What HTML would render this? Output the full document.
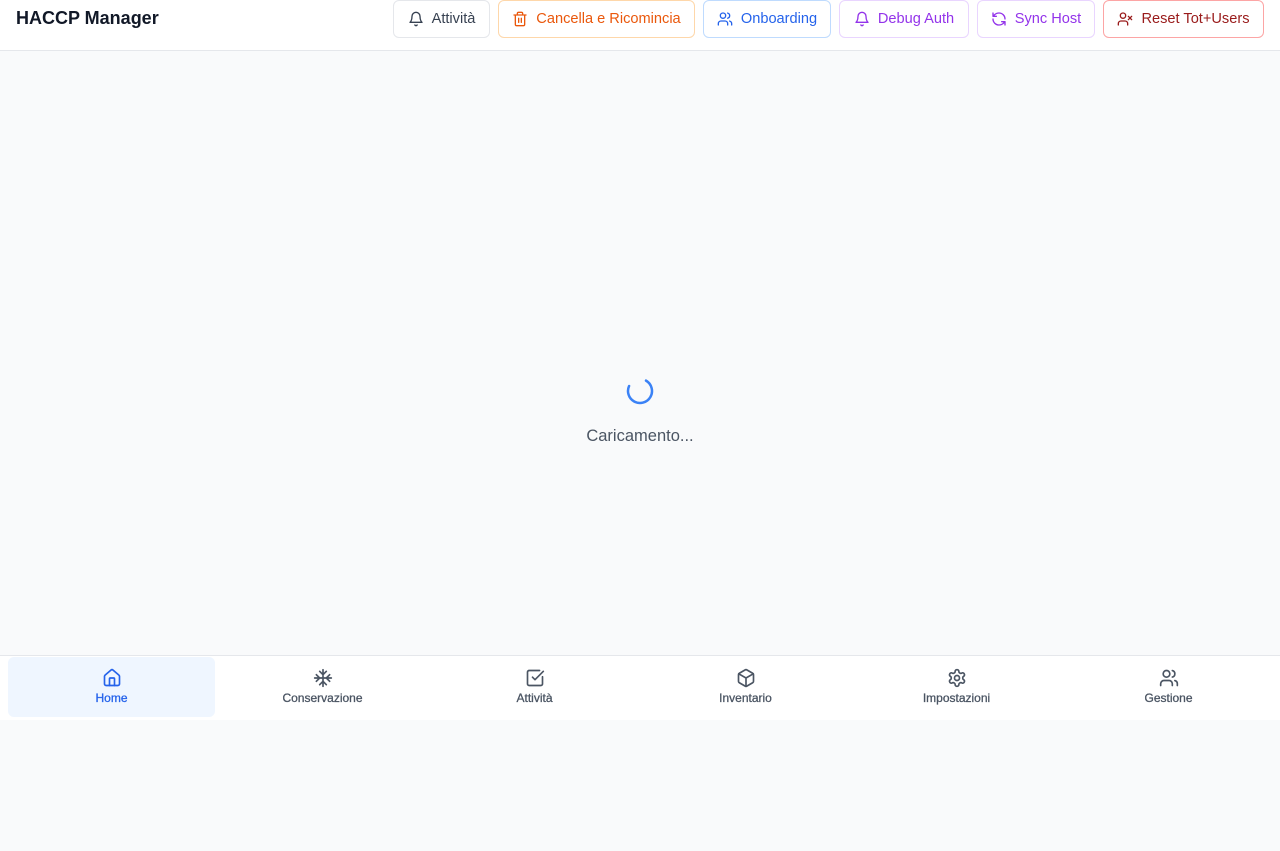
<!DOCTYPE html>
<html><head><meta charset="utf-8"><style>
*{box-sizing:border-box;margin:0;padding:0}
body{width:1280px;height:851px;background:#f9fafb;font-family:"Liberation Sans",sans-serif;position:relative;overflow:hidden}
header{position:absolute;left:0;top:0;width:1280px;height:51px;background:#fff;border-bottom:1px solid #e5e7eb}
h1{position:absolute;left:16px;top:8px;font-size:18px;font-weight:700;color:#111827}
.b{position:absolute;top:0;height:38px;border:1px solid;border-radius:6px;display:flex;align-items:center;justify-content:center;gap:8px;font-size:14.6px;background:#fff}
.b svg{width:16px;height:16px;fill:none;stroke:currentColor;stroke-width:2;stroke-linecap:round;stroke-linejoin:round}
nav{position:absolute;left:0;top:655px;width:1280px;height:65px;background:#fff;border-top:1px solid #e5e7eb}
.n{position:absolute;top:1px;width:207px;height:60px;border-radius:6px;display:flex;flex-direction:column;align-items:center;justify-content:center;gap:3px;padding-bottom:2px;font-size:12px;color:#4b5563;-webkit-text-stroke:0.3px currentColor}
.n svg{width:20px;height:20px;fill:none;stroke:currentColor;stroke-width:2;stroke-linecap:round;stroke-linejoin:round;-webkit-text-stroke:0}
</style></head><body>
<header><h1>HACCP Manager</h1>
<div class="b" style="left:393px;width:97px;border-color:#e5e7eb;color:#374151"><svg viewBox="0 0 24 24"><path d="M6 8a6 6 0 0 1 12 0c0 7 3 9 3 9H3s3-2 3-9"/><path d="M10.3 21a1.94 1.94 0 0 0 3.4 0"/></svg>Attività</div>
<div class="b" style="left:498px;width:197px;border-color:#fed7aa;color:#ea580c"><svg viewBox="0 0 24 24"><path d="M3 6h18M19 6v14a2 2 0 0 1-2 2H7a2 2 0 0 1-2-2V6M8 6V4a2 2 0 0 1 2-2h4a2 2 0 0 1 2 2v2M10 11v6M14 11v6"/></svg>Cancella e Ricomincia</div>
<div class="b" style="left:703px;width:128px;border-color:#bfdbfe;color:#2563eb"><svg viewBox="0 0 24 24"><path d="M16 21v-2a4 4 0 0 0-4-4H6a4 4 0 0 0-4 4v2"/><circle cx="9" cy="7" r="4"/><path d="M22 21v-2a4 4 0 0 0-3-3.87M16 3.13a4 4 0 0 1 0 7.75"/></svg>Onboarding</div>
<div class="b" style="left:839px;width:130px;border-color:#e9d5ff;color:#9333ea"><svg viewBox="0 0 24 24"><path d="M6 8a6 6 0 0 1 12 0c0 7 3 9 3 9H3s3-2 3-9"/><path d="M10.3 21a1.94 1.94 0 0 0 3.4 0"/></svg>Debug Auth</div>
<div class="b" style="left:977px;width:118px;border-color:#e9d5ff;color:#9333ea"><svg viewBox="0 0 24 24"><path d="M21 12a9 9 0 0 0-9-9 9.75 9.75 0 0 0-6.74 2.74L3 8M3 3v5h5M3 12a9 9 0 0 0 9 9 9.75 9.75 0 0 0 6.74-2.74L21 16M16 16h5v5"/></svg>Sync Host</div>
<div class="b" style="left:1103px;width:161px;border-color:#fca5a5;color:#991b1b"><svg viewBox="0 0 24 24"><path d="M16 21v-2a4 4 0 0 0-4-4H6a4 4 0 0 0-4 4v2"/><circle cx="9" cy="7" r="4"/><path d="M17 8l5 5M22 8l-5 5"/></svg>Reset Tot+Users</div>
</header>
<svg style="position:absolute;left:626px;top:377px" width="28" height="28" viewBox="0 0 28 28"><circle cx="14" cy="14" r="12" fill="none" stroke="#3b82f6" stroke-width="2.5" stroke-dasharray="55 20" stroke-linecap="round" transform="rotate(-60 14 14)"/></svg>
<div style="position:absolute;left:0;width:1280px;top:427px;text-align:center;font-size:16.5px;color:#4b5563">Caricamento...</div>
<nav>
<div class="n" style="left:8px;background:#eff6ff;color:#2563eb"><svg viewBox="0 0 24 24"><path d="M15 21v-8a1 1 0 0 0-1-1h-4a1 1 0 0 0-1 1v8"/><path d="M3 10a2 2 0 0 1 .7-1.5l7-6a2 2 0 0 1 2.6 0l7 6A2 2 0 0 1 21 10v9a2 2 0 0 1-2 2H5a2 2 0 0 1-2-2z"/></svg>Home</div>
<div class="n" style="left:219px"><svg viewBox="0 0 24 24"><path d="M2 12h20M12 2v20M20 16l-4-4 4-4M4 8l4 4-4 4M16 4l-4 4-4-4M8 20l4-4 4 4"/></svg>Conservazione</div>
<div class="n" style="left:431px"><svg viewBox="0 0 24 24"><path d="M21 10.5V19a2 2 0 0 1-2 2H5a2 2 0 0 1-2-2V5a2 2 0 0 1 2-2h12.5"/><path d="m9 11 3 3L22 4"/></svg>Attività</div>
<div class="n" style="left:642px"><svg viewBox="0 0 24 24"><path d="M21 8a2 2 0 0 0-1-1.73l-7-4a2 2 0 0 0-2 0l-7 4A2 2 0 0 0 3 8v8a2 2 0 0 0 1 1.730l7 4a2 2 0 0 0 2 0l7-4A2 2 0 0 0 21 16Z"/><path d="m3.3 7 8.7 5 8.7-5M12 22V12"/></svg>Inventario</div>
<div class="n" style="left:853px"><svg viewBox="0 0 24 24"><path d="M12.22 2h-.44a2 2 0 0 0-2 2v.18a2 2 0 0 1-1 1.73l-.43.25a2 2 0 0 1-2 0l-.15-.08a2 2 0 0 0-2.730.73l-.22.38a2 2 0 0 0 .73 2.73l.15.1a2 2 0 0 1 1 1.72v.51a2 2 0 0 1-1 1.74l-.15.09a2 2 0 0 0-.73 2.73l.22.38a2 2 0 0 0 2.73.73l.15-.08a2 2 0 0 1 2 0l.43.25a2 2 0 0 1 1 1.73V20a2 2 0 0 0 2 2h.44a2 2 0 0 0 2-2v-.18a2 2 0 0 1 1-1.73l.43-.25a2 2 0 0 1 2 0l.15.08a2 2 0 0 0 2.73-.73l.22-.39a2 2 0 0 0-.73-2.73l-.15-.08a2 2 0 0 1-1-1.74v-.5a2 2 0 0 1 1-1.74l.15-.09a2 2 0 0 0 .73-2.73l-.22-.38a2 2 0 0 0-2.73-.73l-.15.08a2 2 0 0 1-2 0l-.43-.25a2 2 0 0 1-1-1.73V4a2 2 0 0 0-2-2z"/><circle cx="12" cy="12" r="3"/></svg>Impostazioni</div>
<div class="n" style="left:1065px"><svg viewBox="0 0 24 24"><path d="M16 21v-2a4 4 0 0 0-4-4H6a4 4 0 0 0-4 4v2"/><circle cx="9" cy="7" r="4"/><path d="M22 21v-2a4 4 0 0 0-3-3.87M16 3.13a4 4 0 0 1 0 7.75"/></svg>Gestione</div>
</nav>
</body></html>
